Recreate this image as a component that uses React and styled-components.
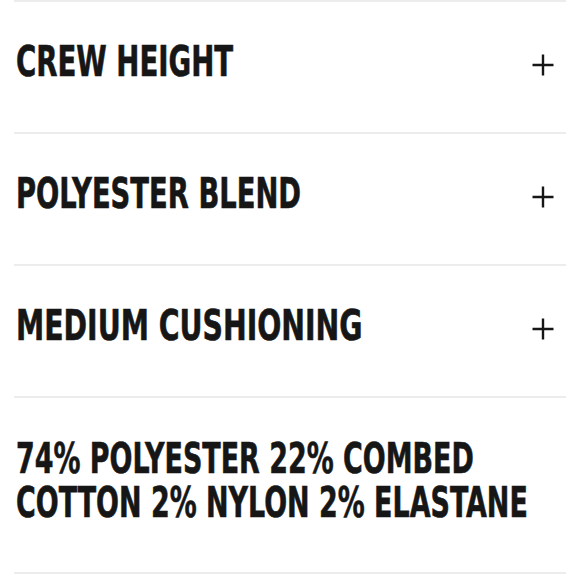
import React from 'react'
import styled, { createGlobalStyle } from 'styled-components'

const GlobalStyle = createGlobalStyle`
    html, body {
        margin: 0;
        padding: 0;
        background: #ffffff;
    }
    body {
        font-family: "DejaVu Sans Condensed", "DejaVu Sans", sans-serif;
    }
`;

const Page = styled.div`
    width: 580px;
    padding: 0 14px;
    box-sizing: border-box;
`;

const List = styled.div`
    border-top: 2px solid #ececec;
`;

const Row = styled.div`
    display: flex;
    align-items: center;
    justify-content: space-between;
    height: ${p => p.$h}px;
    border-bottom: 2px solid #ececec;
    padding: 0 12px 0 2px;
    box-sizing: border-box;
`;

const Title = styled.h3`
    margin: 0;
    font-family: "DejaVu Sans Condensed", "DejaVu Sans", sans-serif;
    font-weight: 700;
    font-stretch: condensed;
    font-size: 42px;
    line-height: 44px;
    color: #161616;
    -webkit-text-stroke: 0.6px #161616;
    transform: scaleX(${p => p.$sx || 0.725});
    transform-origin: left center;
    white-space: nowrap;
    margin-top: ${p => p.$shift || 0}px;
`;

const Plus = styled.svg`
    width: 22px;
    height: 22px;
    flex: none;
    margin-top: -4px;
`;

const PlusIcon = () => (
    <Plus viewBox="0 0 22 22">
        <path d="M11 0.5v21M0.5 11h21" stroke="#161616" strokeWidth="2.4" fill="none" />
    </Plus>
)

// label + horizontal squeeze so the DejaVu widths land near the condensed face
const items = [
    ['CREW HEIGHT', 0.73],
    ['POLYESTER BLEND', 0.725],
    ['MEDIUM CUSHIONING', 0.75],
]

export default function App() {
    return (
        <Page>
            <GlobalStyle />
            <List>
                {items.map(([t, sx]) => (
                    <Row key={t} $h={132}>
                        <Title $shift={-10} $sx={sx}>{t}</Title>
                        <PlusIcon />
                    </Row>
                ))}
                <Row $h={176}>
                    <Title $shift={-8} $sx={0.713}>74% POLYESTER 22% COMBED<br />COTTON 2% NYLON 2% ELASTANE</Title>
                </Row>
            </List>
        </Page>
    )
}
